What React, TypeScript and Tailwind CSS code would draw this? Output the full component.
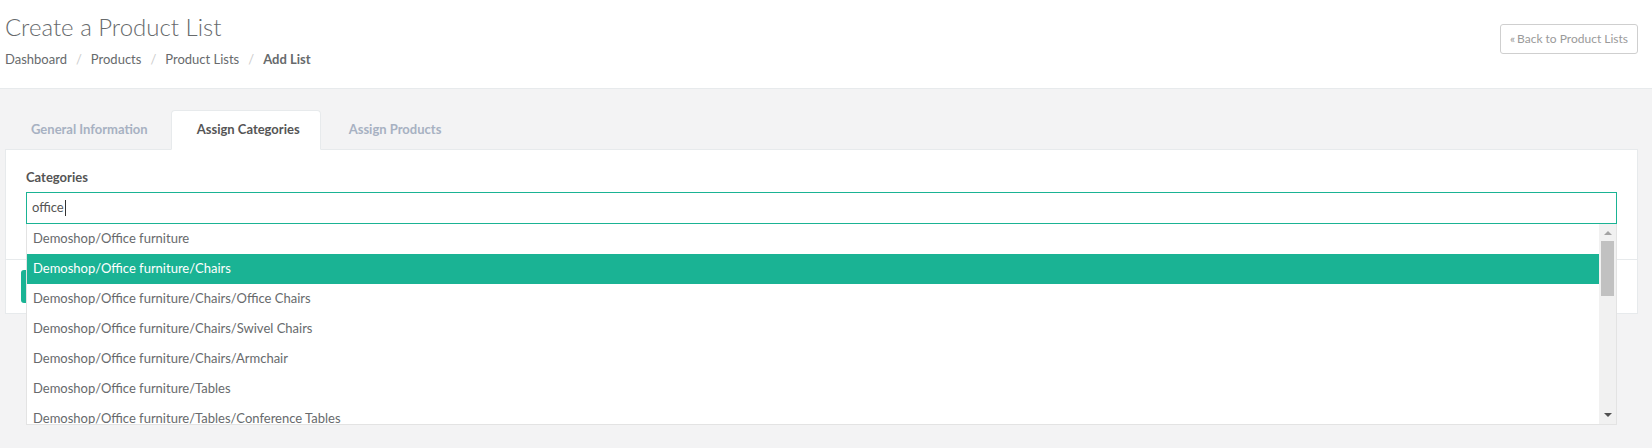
import React from "react";

const items = [
  "Demoshop/Office furniture",
  "Demoshop/Office furniture/Chairs",
  "Demoshop/Office furniture/Chairs/Office Chairs",
  "Demoshop/Office furniture/Chairs/Swivel Chairs",
  "Demoshop/Office furniture/Chairs/Armchair",
  "Demoshop/Office furniture/Tables",
  "Demoshop/Office furniture/Tables/Conference Tables",
  "Demoshop/Office furniture/Tables/Desks",
  "Demoshop/Office furniture/Storage",
];

function Sep() {
  return <span className="px-[9px] text-[#cccccc]">/</span>;
}

export default function App() {
  return (
    <div className="min-h-screen bg-[#f3f3f4] font-[Lato,'Open_Sans',sans-serif] text-[13px] text-[#676a6c]">
      <header className="flex h-[89px] justify-between border-b border-[#e7eaec] bg-white pl-[5px] pr-[14px]">
        <div>
          <h2 className="mt-[14px] text-[24px] font-light leading-[26px] text-[#676a6c]">
            Create a Product List
          </h2>
          <ol className="mt-[10px] flex leading-[18px]">
            <li>Dashboard</li>
            <Sep />
            <li>Products</li>
            <Sep />
            <li>Product Lists</li>
            <Sep />
            <li className="font-bold">Add List</li>
          </ol>
        </div>
        <div className="pt-[24px]">
          <button className="flex h-[30px] items-center rounded-[3px] border border-[#cfcfcf] bg-white px-[9px] text-[12px] text-[#9a9a9a]">
            <span className="mr-[2px] text-[12px]">«</span>Back to Product Lists
          </button>
        </div>
      </header>

      <main className="pl-[5px] pr-[14px] pt-[21px]">
        <div className="flex gap-[2px]">
          <div className="-mb-px rounded-t-[4px] border border-transparent pb-[10px] pl-[25px] pr-[20px] pt-[9px] font-bold leading-[19px] text-[#a7b1c2]">
            General Information
          </div>
          <div className="relative z-10 -mb-px rounded-t-[4px] border border-[#e7eaec] border-b-white bg-white pb-[10px] pl-[25px] pr-[20px] pt-[9px] font-bold leading-[19px] text-[#555555]">
            Assign Categories
          </div>
          <div className="-mb-px rounded-t-[4px] border border-transparent pb-[10px] pl-[25px] pr-[20px] pt-[9px] font-bold leading-[19px] text-[#a7b1c2]">
            Assign Products
          </div>
        </div>

        <div className="border border-[#e7eaec] bg-white">
          <div className="px-[20px] pb-[35px] pt-[20px]">
            <label className="mb-[7px] block font-bold leading-[15px] text-[#555555]">
              Categories
            </label>
            <div className="relative">
              <div className="flex h-[32px] items-center border border-[#1ab394] px-[5px] text-[13px] text-[#555555]">
                office
                <span className="ml-[1px] inline-block h-[16px] w-[1px] bg-[#333333]" />
              </div>
              <div className="absolute left-0 right-0 top-[32px] z-20 flex h-[201px] border border-t-0 border-[#e3e3e3] bg-white">
                <div className="flex-1 overflow-hidden">
                  {items.map((it, i) => (
                    <div
                      key={it}
                      className={
                        i === 1
                          ? "flex h-[30px] items-center bg-[#1ab394] pl-[6px] text-white"
                          : "flex h-[30px] items-center pl-[6px] text-[#676a6c]"
                      }
                    >
                      {it}
                    </div>
                  ))}
                </div>
                <div className="relative w-[17px] bg-[#f1f1f1]">
                  <div className="absolute left-[5px] top-[7px] h-0 w-0 border-x-[4px] border-b-[4px] border-x-transparent border-b-[#a3a3a3]" />
                  <div className="absolute left-[2px] top-[17px] h-[55px] w-[13px] bg-[#c1c1c1]" />
                  <div className="absolute bottom-[7px] left-[5px] h-0 w-0 border-x-[4px] border-t-[4px] border-x-transparent border-t-[#505050]" />
                </div>
              </div>
            </div>
          </div>
          <div className="border-t border-[#e7eaec] px-[15px] py-[10px]">
            <button className="h-[33px] rounded-[3px] bg-[#1ab394] px-[12px] text-white">
              Save
            </button>
          </div>
        </div>
      </main>
    </div>
  );
}
